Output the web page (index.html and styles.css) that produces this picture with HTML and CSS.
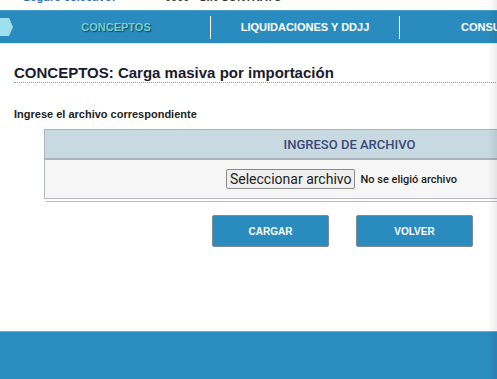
FILE: index.html
```html
<!DOCTYPE html>
<html lang="es">
<head>
<meta charset="utf-8">
<title>Conceptos - Carga masiva</title>
<link rel="stylesheet" href="styles.css">
</head>
<body>
<div class="page">
  <div class="topinfo">
    <span class="label">Seguro colectivo:</span>
    <span class="value">0000 - SIN CONTRATO</span>
  </div>
  <nav class="nav">
    <span class="arrow"></span>
    <a class="nav-item active">CONCEPTOS</a>
    <a class="nav-item">LIQUIDACIONES Y DDJJ</a>
    <a class="nav-item">CONSULTAS</a>
  </nav>
  <main class="content">
    <h1 class="title">CONCEPTOS: Carga masiva por importación</h1>
    <p class="hint">Ingrese el archivo correspondiente</p>
    <section class="box">
      <div class="box-head">INGRESO DE ARCHIVO</div>
      <div class="box-body">
        <span class="file-btn">Seleccionar archivo</span>
        <span class="file-name">No se eligió archivo</span>
      </div>
    </section>
    <div class="actions">
      <button class="btn">CARGAR</button>
      <button class="btn">VOLVER</button>
    </div>
  </main>
  <footer class="footer"></footer>
</div>
<div class="edge-shadow"></div>
</body>
</html>
```
FILE: styles.css
```css
html, body {
  margin: 0;
  padding: 0;
  height: 100%;
  overflow: hidden;
  background: #fff;
}
body {
  font-family: "Liberation Sans", Arial, sans-serif;
}
.page {
  width: 660px;
  min-height: 379px;
  display: flex;
  flex-direction: column;
}
.topinfo {
  height: 10px;
  overflow: hidden;
  display: flex;
  font-size: 11px;
  font-weight: bold;
  line-height: 12px;
}
.topinfo .label,
.topinfo .value {
  margin-top: -9px;
}
.topinfo .label {
  color: #2a6fb5;
  margin-left: 23px;
  width: 142px;
}
.topinfo .value {
  color: #333;
}
.nav {
  height: 34px;
  background: #2a8bbe;
  border-top: 1px solid #4aa0cc;
  box-sizing: border-box;
  display: flex;
  align-items: center;
  border-bottom: 1px solid #d6ebf5;
}
.arrow {
  width: 13px;
  height: 18px;
  background: #9ee0ec;
  clip-path: polygon(0 0, 70% 0, 100% 50%, 70% 100%, 0 100%);
  margin-right: 9px;
  flex: none;
}
.nav-item {
  width: 189px;
  flex: none;
  text-align: center;
  color: #fff;
  font-weight: bold;
  font-size: 11px;
  line-height: 23px;
  border-right: 1px solid #fff;
  box-sizing: border-box;
}
.nav-item:last-child {
  border-right: none;
}
.nav-item.active {
  color: #74d0d0;
  text-shadow: 1px 1px 1px #17435f;
}
.content {
  padding: 0 0 0 14px;
  flex: 1;
}
.title {
  margin: 20px 0 0;
  font-size: 15px;
  font-weight: bold;
  color: #1b1b2e;
  line-height: 18px;
  padding-bottom: 0;
  border-bottom: 1px dotted #5fb3dd;
}
.hint {
  margin: 24px 0 0;
  font-size: 11px;
  font-weight: bold;
  color: #222;
  line-height: 14px;
}
.box {
  margin: 8px 0 0 30px;
  width: 597px;
  border-left: 1px solid #b0b4bb;
  border-top: 1px solid #b0b4bb;
  font-family: Roboto, "Liberation Sans", sans-serif;
}
.box-head {
  height: 28px;
  background: #c8d9e2;
  border-bottom: 2px solid #aab3ba;
  text-align: center;
  line-height: 29px;
  font-size: 13px;
  font-weight: 500;
  color: #3b4a78;
  padding-left: 12px;
}
.box-body {
  height: 39px;
  background: #f6f6f6;
  border-bottom: 1px solid #b9b9cc;
  box-shadow: 0 3px 0 -1px #fff, 0 4px 0 -1px #b9b9cc;
  display: flex;
  align-items: center;
  justify-content: center;
  gap: 5px;
  padding-right: 4px;
  box-sizing: border-box;
}
.file-btn {
  font-size: 14px;
  color: #222;
  background: #efefef;
  border: 1px solid #8a8a8a;
  border-radius: 2px;
  padding: 0 3px;
  line-height: 18px;
}
.file-name {
  font-size: 11px;
  font-weight: 500;
  color: #222;
}
.actions {
  display: flex;
  gap: 27px;
  margin: 16px 0 0 198px;
}
.btn {
  width: 117px;
  height: 32px;
  background: #2a8bbe;
  border: 1px solid #7d8a93;
  border-radius: 2px;
  color: #fff;
  font-family: "Liberation Sans", Arial, sans-serif;
  font-weight: bold;
  font-size: 10px;
  padding: 0;
}
.footer {
  height: 47px;
  background: #2a8cbf;
  border-top: 1px solid #6aaed2;
}
.edge-shadow {
  position: fixed;
  top: 0;
  right: 0;
  width: 9px;
  height: 100%;
  background: linear-gradient(to right, rgba(0,0,0,0), rgba(0,0,0,0.07));
  pointer-events: none;
}
```
